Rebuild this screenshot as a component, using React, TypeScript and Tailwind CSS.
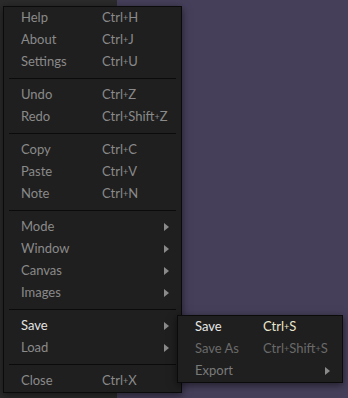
import React from "react";

type Item =
  | { kind: "sep" }
  | { kind: "item"; label: string; shortcut?: string; sub?: boolean; active?: boolean; dim?: boolean };

const mainItems: Item[] = [
  { kind: "item", label: "Help", shortcut: "Ctrl+H" },
  { kind: "item", label: "About", shortcut: "Ctrl+J" },
  { kind: "item", label: "Settings", shortcut: "Ctrl+U" },
  { kind: "sep" },
  { kind: "item", label: "Undo", shortcut: "Ctrl+Z" },
  { kind: "item", label: "Redo", shortcut: "Ctrl+Shift+Z" },
  { kind: "sep" },
  { kind: "item", label: "Copy", shortcut: "Ctrl+C" },
  { kind: "item", label: "Paste", shortcut: "Ctrl+V" },
  { kind: "item", label: "Note", shortcut: "Ctrl+N" },
  { kind: "sep" },
  { kind: "item", label: "Mode", sub: true },
  { kind: "item", label: "Window", sub: true },
  { kind: "item", label: "Canvas", sub: true },
  { kind: "item", label: "Images", sub: true },
  { kind: "sep" },
  { kind: "item", label: "Save", sub: true, active: true },
  { kind: "item", label: "Load", sub: true },
  { kind: "sep" },
  { kind: "item", label: "Close", shortcut: "Ctrl+X" },
];

const Arrow: React.FC = () => (
  <svg width="5" height="8" viewBox="0 0 5 8" className="shrink-0">
    <path d="M0 0 L5 4 L0 8 Z" fill="#8a8a8a" />
  </svg>
);

// small raised plus like the reference font
const Keys: React.FC<{ text: string }> = ({ text }) => {
  const parts = text.split("+");
  return (
    <span>
      {parts.map((p, i) => (
        <React.Fragment key={i}>
          {i > 0 && <span className="text-[9px] relative -top-[1px]">+</span>}
          {p}
        </React.Fragment>
      ))}
    </span>
  );
};

export default function App() {
  return (
    <div className="relative flex w-[348px] h-[398px] overflow-hidden font-['Lato','Liberation_Sans',sans-serif] text-[13px]">
      <div className="w-[117px] h-full bg-[#2b2b2b]" />
      <div className="flex-1 h-full bg-[#463f5a]" />

      {/* main menu */}
      <div className="absolute left-[3px] top-[6px] w-[179px] bg-[#1f1f1f] border border-[#0b0b0b] shadow-[0_2px_8px_rgba(0,0,0,0.55)]">
        {mainItems.map((it, i) =>
          it.kind === "sep" ? (
            <div key={i} className="mx-[5px] my-[5px] h-px bg-[#0b0b0b]" />
          ) : (
            <div
              key={i}
              className={`flex items-center h-[22px] pl-[17px] pr-[12px] ${
                it.active ? "text-[#e2e2e2]" : "text-[#8a8a8a]"
              }`}
            >
              <span className="w-[81px]">{it.label}</span>
              <span className="flex-1">{it.shortcut && <Keys text={it.shortcut} />}</span>
              {it.sub && <Arrow />}
            </div>
          )
        )}
      </div>

      {/* submenu */}
      <div className="absolute left-[177px] top-[315px] w-[166px] bg-[#1f1f1f] border border-[#0b0b0b] shadow-[0_2px_8px_rgba(0,0,0,0.55)]">
        <div className="flex items-center h-[22px] pl-[17px] pr-[12px] text-[#e6e6e6]">
          <span className="w-[68px]">Save</span>
          <span className="flex-1 text-[#ebe6cc]">
            <Keys text="Ctrl+S" />
          </span>
        </div>
        <div className="flex items-center h-[22px] pl-[17px] pr-[12px] text-[#6a6a6a]">
          <span className="w-[68px]">Save As</span>
          <span className="flex-1">
            <Keys text="Ctrl+Shift+S" />
          </span>
        </div>
        <div className="flex items-center h-[22px] pl-[17px] pr-[12px] text-[#7a7a7a]">
          <span className="flex-1">Export</span>
          <Arrow />
        </div>
      </div>
    </div>
  );
}
